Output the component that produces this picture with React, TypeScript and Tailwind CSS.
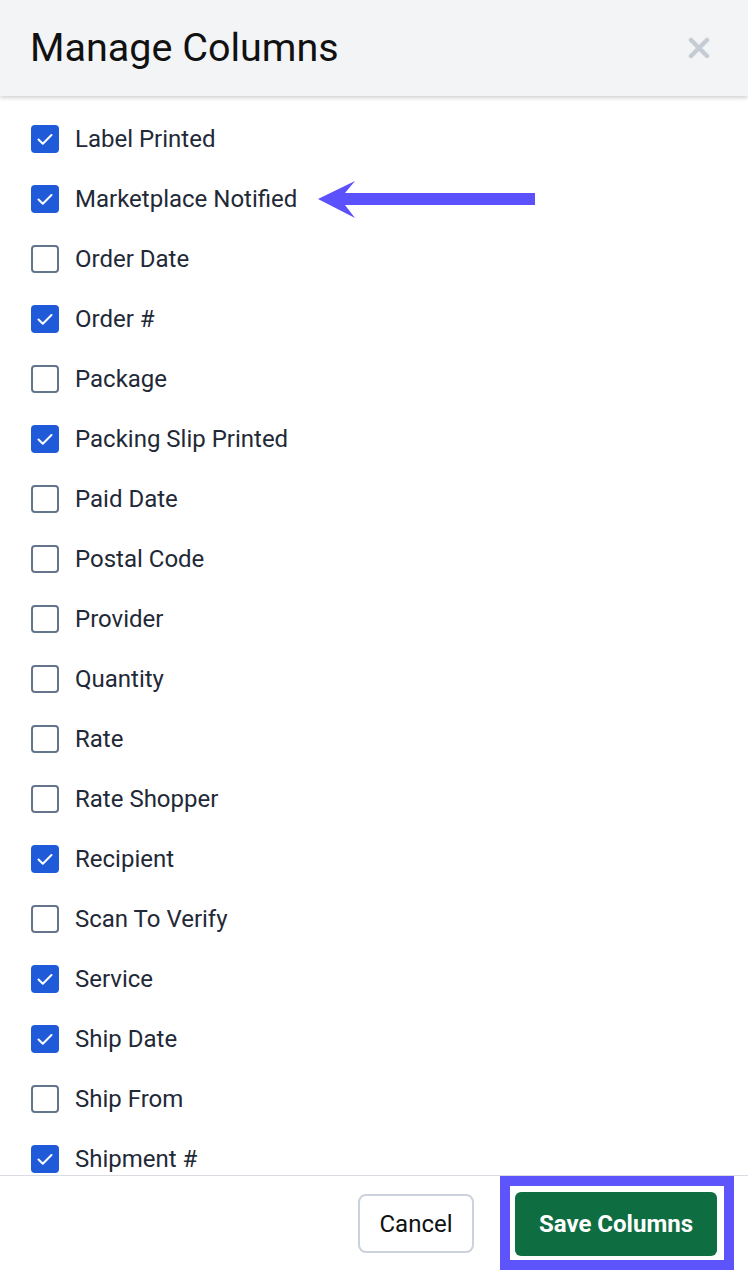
import React from "react";

const items: [string, boolean][] = [
  ["Label Printed", true],
  ["Marketplace Notified", true],
  ["Order Date", false],
  ["Order #", true],
  ["Package", false],
  ["Packing Slip Printed", true],
  ["Paid Date", false],
  ["Postal Code", false],
  ["Provider", false],
  ["Quantity", false],
  ["Rate", false],
  ["Rate Shopper", false],
  ["Recipient", true],
  ["Scan To Verify", false],
  ["Service", true],
  ["Ship Date", true],
  ["Ship From", false],
  ["Shipment #", true],
];

function Box({ checked }: { checked: boolean }) {
  if (checked) {
    return (
      <div className="w-[28px] h-[28px] rounded-[4px] bg-[#1f5bd9] flex items-center justify-center shrink-0">
        <svg width="28" height="28" viewBox="0 0 28 28" fill="none">
          <path d="M7.5 14.5 L11.8 18.8 L20.5 10" stroke="white" strokeWidth="2" strokeLinecap="round" strokeLinejoin="round" />
        </svg>
      </div>
    );
  }
  return <div className="w-[28px] h-[28px] rounded-[4px] border-2 border-[#64748b] bg-white shrink-0" />;
}

export default function App() {
  return (
    <div className="relative w-[748px] h-[1272px] flex flex-col bg-white overflow-hidden font-['Roboto',sans-serif]">
      <div className="relative z-10 h-[96px] shrink-0 bg-[#f3f4f6] flex items-center justify-between pl-[30px] pr-[38px] shadow-[0_2px_4px_rgba(0,0,0,0.18)]">
        <h1 className="text-[39.5px] leading-none text-[#111111] font-normal">Manage Columns</h1>
        <svg width="22" height="22" viewBox="0 0 22 22" fill="none">
          <path d="M3 3 L19 19 M19 3 L3 19" stroke="#c6ccd4" strokeWidth="4.5" strokeLinecap="round" />
        </svg>
      </div>
      <div className="flex-1 overflow-hidden pt-[13px]">
        {items.map(([label, checked]) => (
          <div key={label} className="h-[60px] flex items-center pl-[31px] gap-[16px]">
            <Box checked={checked} />
            <span className="text-[24px] leading-none text-[#1f2937]">{label}</span>
          </div>
        ))}
      </div>
      <div className="h-[97px] shrink-0 border-t border-[#d9dde3] flex items-start justify-end pr-[14px] gap-[26px]">
        <button className="mt-[18px] w-[116px] h-[59px] rounded-[8px] border-2 border-[#cbd2db] bg-white text-[24px] text-[#111111]">
          Cancel
        </button>
        <div className="border-[10px] border-[#5d54fb] pl-[5px] pr-[7px] pt-[6px] pb-[4px] bg-white">
          <button className="w-[202px] h-[64px] rounded-[6px] bg-[#0f6e41] text-white text-[24px] font-bold">
            Save Columns
          </button>
        </div>
      </div>
      <svg className="absolute left-[318px] top-[180px]" width="218" height="40" viewBox="0 0 218 40">
        <polygon points="0,19 37,1 27,13 217,13 217,25 27,25 37,38" fill="#5b52fd" />
      </svg>
    </div>
  );
}
